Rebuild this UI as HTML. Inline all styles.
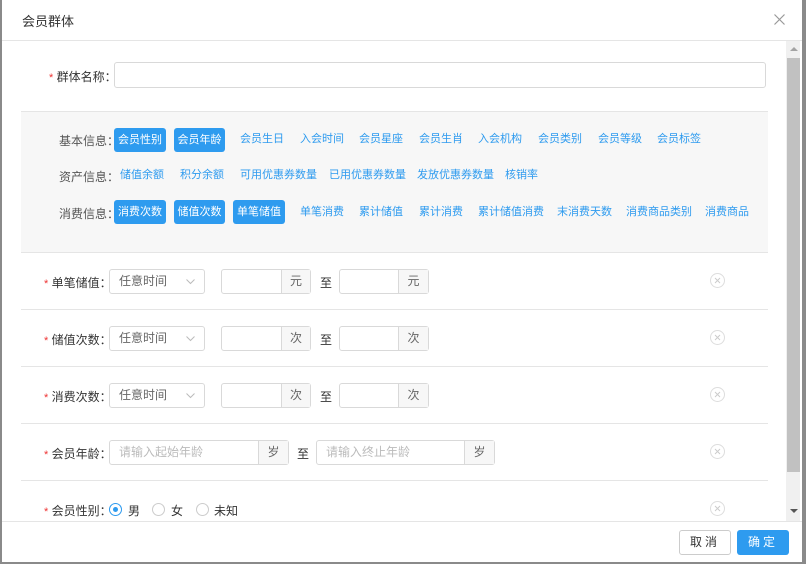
<!DOCTYPE html>
<html><head><meta charset="utf-8"><style>
*{box-sizing:border-box;margin:0;padding:0}
body{width:806px;height:564px;background:#8a8a8a;font-family:"Liberation Sans","Noto Sans CJK SC",sans-serif;font-size:12px;color:#333;position:relative;overflow:hidden}
.dlg{position:absolute;left:2px;top:0;width:800px;height:562px;background:#fff}
.a{position:absolute;white-space:nowrap}
.title{left:20px;top:11px;font-size:13px;color:#333}
.hl{left:0;width:800px;height:1px;background:#e5e5e5}
.inp{border:1px solid #d9d9d9;border-radius:3px;background:#fff}
.req{color:#e33;font-size:11px}
.lbl{font-size:12px;color:#333}
.tag{height:24px;line-height:24px;border-radius:3px;background:#2e9bef;color:#fff;text-align:center;font-size:11px}
.lk{color:#2e9bef;font-size:11px;line-height:24px}
.grp{height:25px;border:1px solid #d9d9d9;border-radius:3px;display:flex}
.grp .ad{background:#f7f7f7;border-left:1px solid #d9d9d9;color:#666;text-align:center;line-height:23px}
.sel{height:25px;color:#666;padding-left:9px;line-height:23px}
.del{width:15px;height:15px}
.sep{left:19px;width:747px;height:1px;background:#e5e5e5}
.ph{color:#bbb;padding-left:9px;line-height:23px;flex:1}
</style></head><body>
<div class="dlg">
<div class="a title">会员群体</div>
<svg class="a" style="left:772px;top:14px" width="11" height="11"><path d="M0.5 0.5L10.5 10.5M10.5 0.5L0.5 10.5" stroke="#999" stroke-width="1.2"/></svg>
<div class="a hl" style="top:40px"></div>
<div class="a hl" style="top:521px"></div>
<div class="a" style="left:784px;top:41px;width:14px;height:480px;background:#f0f0f0"></div>
<div class="a" style="left:785px;top:58px;width:13px;height:414px;background:#c1c1c1"></div>
<div class="a" style="left:788px;top:47px;width:0;height:0;border:4px solid transparent;border-bottom-color:#a3a3a3;border-top:0"></div>
<div class="a" style="left:788px;top:509px;width:0;height:0;border:4px solid transparent;border-top-color:#555;border-bottom:0"></div>

<div class="a lbl" style="left:47px;top:68px"><span class="req">*</span> 群体名称：</div>
<div class="a inp" style="left:112px;top:62px;width:652px;height:26px"></div>

<div class="a" style="left:19px;top:111px;width:747px;height:141px;background:#f7f7f7;border-top:1px solid #e5e5e5"></div>
<div class="a lbl" style="left:57px;top:132px;color:#555">基本信息：</div>
<div class="a lbl" style="left:57px;top:168px;color:#555">资产信息：</div>
<div class="a lbl" style="left:57px;top:205px;color:#555">消费信息：</div>
<div class="a tag" style="left:112px;top:128px;width:52px">会员性别</div>
<div class="a tag" style="left:172px;top:128px;width:51px">会员年龄</div>
<div class="a lk" style="left:238px;top:127px">会员生日</div>
<div class="a lk" style="left:298px;top:127px">入会时间</div>
<div class="a lk" style="left:357px;top:127px">会员星座</div>
<div class="a lk" style="left:417px;top:127px">会员生肖</div>
<div class="a lk" style="left:476px;top:127px">入会机构</div>
<div class="a lk" style="left:536px;top:127px">会员类别</div>
<div class="a lk" style="left:596px;top:127px">会员等级</div>
<div class="a lk" style="left:655px;top:127px">会员标签</div>
<div class="a lk" style="left:118px;top:163px">储值余额</div>
<div class="a lk" style="left:178px;top:163px">积分余额</div>
<div class="a lk" style="left:238px;top:163px">可用优惠券数量</div>
<div class="a lk" style="left:327px;top:163px">已用优惠券数量</div>
<div class="a lk" style="left:415px;top:163px">发放优惠券数量</div>
<div class="a lk" style="left:503px;top:163px">核销率</div>
<div class="a tag" style="left:112px;top:200px;width:52px">消费次数</div>
<div class="a tag" style="left:172px;top:200px;width:51px">储值次数</div>
<div class="a tag" style="left:231px;top:200px;width:52px">单笔储值</div>
<div class="a lk" style="left:298px;top:200px">单笔消费</div>
<div class="a lk" style="left:357px;top:200px">累计储值</div>
<div class="a lk" style="left:417px;top:200px">累计消费</div>
<div class="a lk" style="left:476px;top:200px">累计储值消费</div>
<div class="a lk" style="left:555px;top:200px">末消费天数</div>
<div class="a lk" style="left:624px;top:200px">消费商品类别</div>
<div class="a lk" style="left:703px;top:200px">消费商品</div>

<div class="a sep" style="top:252px"></div>
<div class="a sep" style="top:309px"></div>
<div class="a sep" style="top:366px"></div>
<div class="a sep" style="top:423px"></div>
<div class="a sep" style="top:480px"></div>

<div class="a lbl" style="left:42px;top:274px"><span class="req">*</span> 单笔储值：</div>
<div class="a inp sel" style="left:107px;top:269px;width:96px">任意时间<svg style="position:absolute;left:76px;top:9px" width="9" height="6"><path d="M0.5 0.5L4.5 4.5L8.5 0.5" stroke="#bbb" fill="none"/></svg></div>
<div class="a grp" style="left:219px;top:269px;width:90px"><div style="flex:1"></div><div class="ad" style="width:29px">元</div></div>
<div class="a lbl" style="left:318px;top:274px">至</div>
<div class="a grp" style="left:337px;top:269px;width:90px"><div style="flex:1"></div><div class="ad" style="width:30px">元</div></div>
<svg class="a del" style="left:708px;top:273px"><circle cx="7.5" cy="7.5" r="7" fill="none" stroke="#ddd"/><path d="M5 5L10 10M10 5L5 10" stroke="#ccc"/></svg>

<div class="a lbl" style="left:42px;top:331px"><span class="req">*</span> 储值次数：</div>
<div class="a inp sel" style="left:107px;top:326px;width:96px">任意时间<svg style="position:absolute;left:76px;top:9px" width="9" height="6"><path d="M0.5 0.5L4.5 4.5L8.5 0.5" stroke="#bbb" fill="none"/></svg></div>
<div class="a grp" style="left:219px;top:326px;width:90px"><div style="flex:1"></div><div class="ad" style="width:29px">次</div></div>
<div class="a lbl" style="left:318px;top:331px">至</div>
<div class="a grp" style="left:337px;top:326px;width:90px"><div style="flex:1"></div><div class="ad" style="width:30px">次</div></div>
<svg class="a del" style="left:708px;top:330px"><circle cx="7.5" cy="7.5" r="7" fill="none" stroke="#ddd"/><path d="M5 5L10 10M10 5L5 10" stroke="#ccc"/></svg>

<div class="a lbl" style="left:42px;top:388px"><span class="req">*</span> 消费次数：</div>
<div class="a inp sel" style="left:107px;top:383px;width:96px">任意时间<svg style="position:absolute;left:76px;top:9px" width="9" height="6"><path d="M0.5 0.5L4.5 4.5L8.5 0.5" stroke="#bbb" fill="none"/></svg></div>
<div class="a grp" style="left:219px;top:383px;width:90px"><div style="flex:1"></div><div class="ad" style="width:29px">次</div></div>
<div class="a lbl" style="left:318px;top:388px">至</div>
<div class="a grp" style="left:337px;top:383px;width:90px"><div style="flex:1"></div><div class="ad" style="width:30px">次</div></div>
<svg class="a del" style="left:708px;top:387px"><circle cx="7.5" cy="7.5" r="7" fill="none" stroke="#ddd"/><path d="M5 5L10 10M10 5L5 10" stroke="#ccc"/></svg>

<div class="a lbl" style="left:42px;top:445px"><span class="req">*</span> 会员年龄：</div>
<div class="a grp" style="left:107px;top:440px;width:180px"><div class="ph">请输入起始年龄</div><div class="ad" style="width:30px">岁</div></div>
<div class="a lbl" style="left:295px;top:445px">至</div>
<div class="a grp" style="left:314px;top:440px;width:179px"><div class="ph">请输入终止年龄</div><div class="ad" style="width:30px">岁</div></div>
<svg class="a del" style="left:708px;top:444px"><circle cx="7.5" cy="7.5" r="7" fill="none" stroke="#ddd"/><path d="M5 5L10 10M10 5L5 10" stroke="#ccc"/></svg>

<div class="a lbl" style="left:42px;top:502px"><span class="req">*</span> 会员性别：</div>
<div class="a" style="left:107px;top:503px;width:13px;height:13px;border:1px solid #2e9bef;border-radius:50%"><div style="margin:3px;width:5px;height:5px;background:#2e9bef;border-radius:50%"></div></div>
<div class="a lbl" style="left:126px;top:502px">男</div>
<div class="a" style="left:150px;top:503px;width:13px;height:13px;border:1px solid #ccc;border-radius:50%"></div>
<div class="a lbl" style="left:169px;top:502px">女</div>
<div class="a" style="left:194px;top:503px;width:13px;height:13px;border:1px solid #ccc;border-radius:50%"></div>
<div class="a lbl" style="left:212px;top:502px">未知</div>
<svg class="a del" style="left:708px;top:501px"><circle cx="7.5" cy="7.5" r="7" fill="none" stroke="#ddd"/><path d="M5 5L10 10M10 5L5 10" stroke="#ccc"/></svg>

<div class="a" style="left:677px;top:530px;width:52px;height:25px;border:1px solid #ccc;border-radius:3px;text-align:center;line-height:23px;color:#333;letter-spacing:3px">取消</div>
<div class="a" style="left:735px;top:530px;width:52px;height:25px;background:#2e9bef;border-radius:3px;text-align:center;line-height:25px;color:#fff;letter-spacing:3px">确定</div>
</div>
</body></html>
